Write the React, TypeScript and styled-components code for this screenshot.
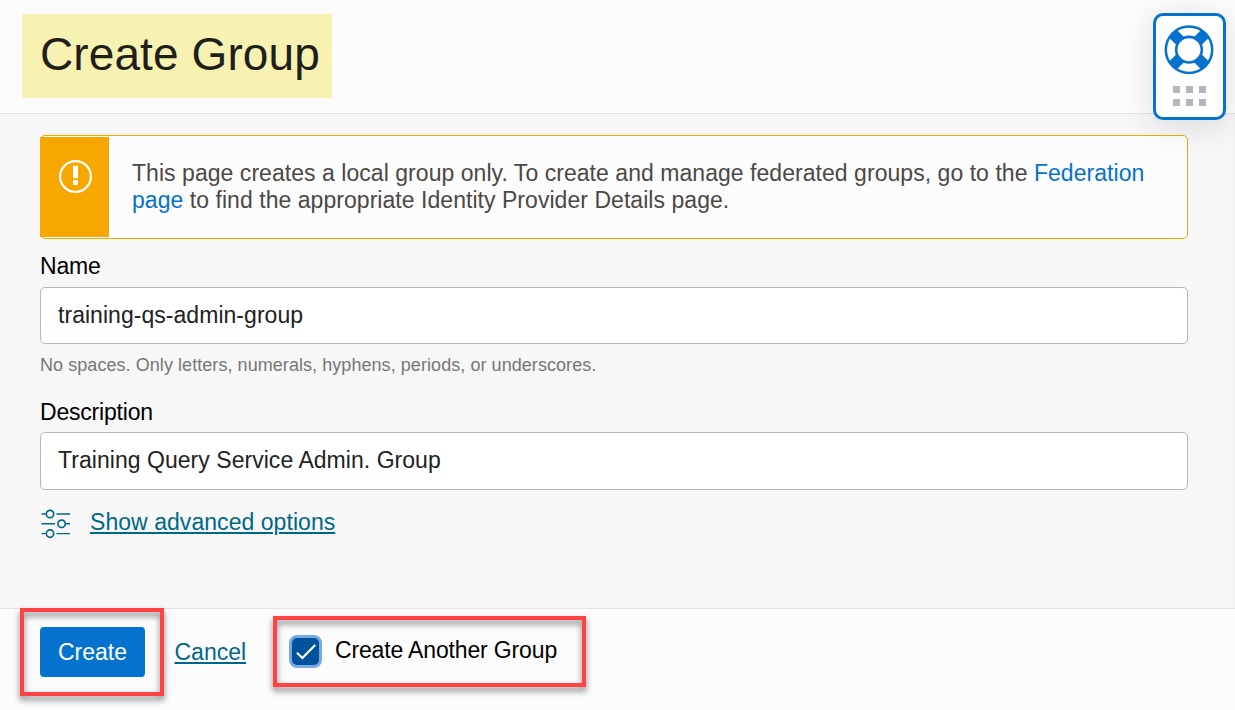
import React, { useState } from "react";
import styled, { createGlobalStyle } from "styled-components";

const GlobalStyle = createGlobalStyle`
  *, *::before, *::after { box-sizing: border-box; }
  body {
    margin: 0;
    overflow: hidden;
    background: #fcfcfc;
    font-family: "Liberation Sans", Arial, sans-serif;
    font-size: 23px;
    color: #000;
  }
`;

const Page = styled.div`
  position: relative;
  display: flex;
  flex-direction: column;
  height: 710px;
  background: #fcfcfc;
`;

const Header = styled.header`
  height: 114px;
  padding: 14px 22px 0;
  border-bottom: 1px solid #e4e4e4;
`;

const Title = styled.h1`
  width: 310px;
  height: 84px;
  margin: 0;
  padding-left: 18px;
  background: #f7f1b2;
  color: #1f1f1a;
  font-size: 46px;
  font-weight: 400;
  line-height: 80px;
  letter-spacing: 0.1px;
  white-space: nowrap;
`;

const Content = styled.main`
  height: 494px;
  padding: 21px 46px 0 40px;
  background: #f7f7f7;
  border-right: 1px solid #efefef;
`;

const Alert = styled.section`
  display: flex;
  height: 104px;
  padding: 1px 0;
  background: #fcfcfc;
  border: 1px solid #f6a800;
  border-radius: 5px;
`;

const AlertMark = styled.div`
  display: flex;
  justify-content: center;
  width: 69px;
  margin-left: -1px;
  padding: 22px 0 0 1px;
  background: #f6a800;
  flex: none;
`;

const AlertText = styled.p`
  margin: 0;
  padding: 23px 30px 0 23px;
  color: #4c4845;
  line-height: 27px;
  letter-spacing: 0.045px;
`;

const AlertLink = styled.a`
  color: #0572ce;
  text-decoration: none;
`;

const Label = styled.label<{ $top: number }>`
  display: block;
  margin-top: ${(p) => p.$top}px;
  line-height: 27px;
  letter-spacing: -0.2px;
`;

const Input = styled.input<{ $height: number; $top: number; $shift: number }>`
  display: block;
  width: 100%;
  height: ${(p) => p.$height}px;
  margin-top: ${(p) => p.$top}px;
  padding: 0 17px ${(p) => p.$shift}px;
  background: #fff;
  border: 1px solid #b3b8c1;
  border-radius: 5px;
  outline: none;
  color: #222;
  font: inherit;
  letter-spacing: 0.04px;
`;

const Hint = styled.p`
  margin: 10px 0 0;
  color: #767676;
  font-size: 18px;
  line-height: 22px;
  letter-spacing: 0.06px;
`;

const Advanced = styled.div`
  display: flex;
  gap: 20px;
  margin-top: 19px;

  svg {
    margin-top: -1px;
  }
`;

const TextLink = styled.a`
  color: #006789;
  line-height: 27px;
  letter-spacing: 0.05px;
  text-decoration: underline;
  text-decoration-thickness: 2px;
  text-underline-offset: 2px;
  white-space: nowrap;
`;

const Footer = styled.footer`
  display: flex;
  align-items: flex-start;
  flex: 1;
  padding-left: 20px;
  border-top: 1px solid #e4e4e4;
`;

const Callout = styled.div<{ $width: number; $height: number; $top: number; $inset: number }>`
  position: relative;
  display: flex;
  align-items: flex-start;
  width: ${(p) => p.$width}px;
  height: ${(p) => p.$height}px;
  margin-top: ${(p) => p.$top}px;
  padding: 19px 0 0 ${(p) => p.$inset}px;

  &::after {
    content: "";
    position: absolute;
    inset: 0;
    border: 4px solid #ff4343;
    filter: drop-shadow(0 4px 3px rgba(0, 0, 0, 0.5));
    pointer-events: none;
  }
`;

const CreateButton = styled.button`
  width: 105px;
  height: 50px;
  padding: 0;
  background: #0572ce;
  border: 0;
  border-radius: 4px;
  color: #fff;
  font: inherit;
`;

const Cancel = styled(TextLink)`
  flex: none;
  width: 109px;
  padding-left: 10.5px;
  margin-top: 30px;
  letter-spacing: 0;
`;

const CheckLabel = styled.label`
  display: flex;
  gap: 13px;
  line-height: 31px;
  letter-spacing: -0.15px;
  white-space: nowrap;
`;

const CheckBox = styled.input`
  position: absolute;
  opacity: 0;
`;

const CheckMark = styled.span`
  display: flex;
  align-items: center;
  justify-content: center;
  flex: none;
  width: 33px;
  height: 33px;
  background: #00539a;
  border: 3px solid #78a9e2;
  border-radius: 8px;
`;

const HelpWidget = styled.button`
  position: absolute;
  top: 13px;
  left: 1153px;
  display: flex;
  flex-direction: column;
  align-items: center;
  gap: 11px;
  width: 73px;
  height: 107px;
  padding: 9px 0 0;
  background: #fff;
  border: 3px solid #0572ce;
  border-radius: 10px;
  box-shadow: 0 5px 36px rgba(0, 0, 0, 0.13);
`;

const Dots = styled.span`
  display: grid;
  grid-template-columns: repeat(3, 7px);
  gap: 6px;
`;

const Dot = styled.i`
  width: 7px;
  height: 7px;
  background: #b3b8c0;
`;

const AlertIcon = () => (
  <svg width="34" height="34" viewBox="0 0 34 34" fill="none">
    <circle cx="17.5" cy="17.5" r="15.4" stroke="#fff" strokeWidth="2.2" />
    <path d="M17.5 6.8v12.4M17.5 21v5" stroke="#fff" strokeWidth="5" />
  </svg>
);

const SlidersIcon = () => (
  <svg width="30" height="32" viewBox="0 0 30 32" fill="none" stroke="#006789" strokeWidth="1.4">
    <path d="M1.5 6h4M16.5 6H30M1.5 15.8H15M26 15.8h4M1.5 25.6h4M16.5 25.6H30" />
    <circle cx="10" cy="6" r="3.7" strokeWidth="1.7" />
    <circle cx="21.6" cy="15.8" r="3.7" strokeWidth="1.7" />
    <circle cx="10" cy="25.6" r="3.7" strokeWidth="1.7" />
  </svg>
);

const LifebuoyIcon = () => (
  <svg width="51" height="50" viewBox="0 0 51 50" fill="none" stroke="#0572ce">
    <path d="M8.8 8.7l8 8M41.2 8.7l-8 8M8.8 40.7l8-8M41.2 40.7l-8-8" strokeWidth="11" />
    <circle cx="25" cy="24.7" r="23.2" strokeWidth="2.5" />
    <circle cx="25" cy="24.7" r="12.8" strokeWidth="2.6" fill="#fff" />
  </svg>
);

const TickIcon = () => (
  <svg width="27" height="27" viewBox="0 0 27 27" fill="none">
    <path d="M5 14.7l5.4 5.3L23.2 7.1" stroke="#fff" strokeWidth="2.2" />
  </svg>
);

export default function App() {
  const [name, setName] = useState("training-qs-admin-group");
  const [description, setDescription] = useState("Training Query Service Admin. Group");
  const [another, setAnother] = useState(true);

  return (
    <>
      <GlobalStyle />
      <Page>
        <Header>
          <Title>Create Group</Title>
        </Header>
        <Content>
          <Alert>
            <AlertMark>
              <AlertIcon />
            </AlertMark>
            <AlertText>
              This page creates a local group only. To create and manage federated groups, go to the{" "}
              <AlertLink>Federation page</AlertLink> to find the appropriate Identity Provider Details page.
            </AlertText>
          </Alert>
          <Label $top={14} htmlFor="name">Name</Label>
          <Input
            id="name"
            $height={57}
            $top={7}
            $shift={0}
            value={name}
            onChange={(e) => setName(e.target.value)}
          />
          <Hint>No spaces. Only letters, numerals, hyphens, periods, or underscores.</Hint>
          <Label $top={23} htmlFor="description">Description</Label>
          <Input
            id="description"
            $height={58}
            $top={6}
            $shift={2}
            value={description}
            onChange={(e) => setDescription(e.target.value)}
          />
          <Advanced>
            <SlidersIcon />
            <TextLink>Show advanced options</TextLink>
          </Advanced>
        </Content>
        <Footer>
          <Callout $width={144} $height={88} $top={-1} $inset={20}>
            <CreateButton>Create</CreateButton>
          </Callout>
          <Cancel>Cancel</Cancel>
          <Callout $width={313} $height={71} $top={7} $inset={16}>
            <CheckLabel>
              <CheckBox type="checkbox" checked={another} onChange={(e) => setAnother(e.target.checked)} />
              <CheckMark>{another && <TickIcon />}</CheckMark>
              Create Another Group
            </CheckLabel>
          </Callout>
        </Footer>
        <HelpWidget aria-label="Help">
          <LifebuoyIcon />
          <Dots>
            {[0, 1, 2, 3, 4, 5].map((n) => (
              <Dot key={n} />
            ))}
          </Dots>
        </HelpWidget>
      </Page>
    </>
  );
}
